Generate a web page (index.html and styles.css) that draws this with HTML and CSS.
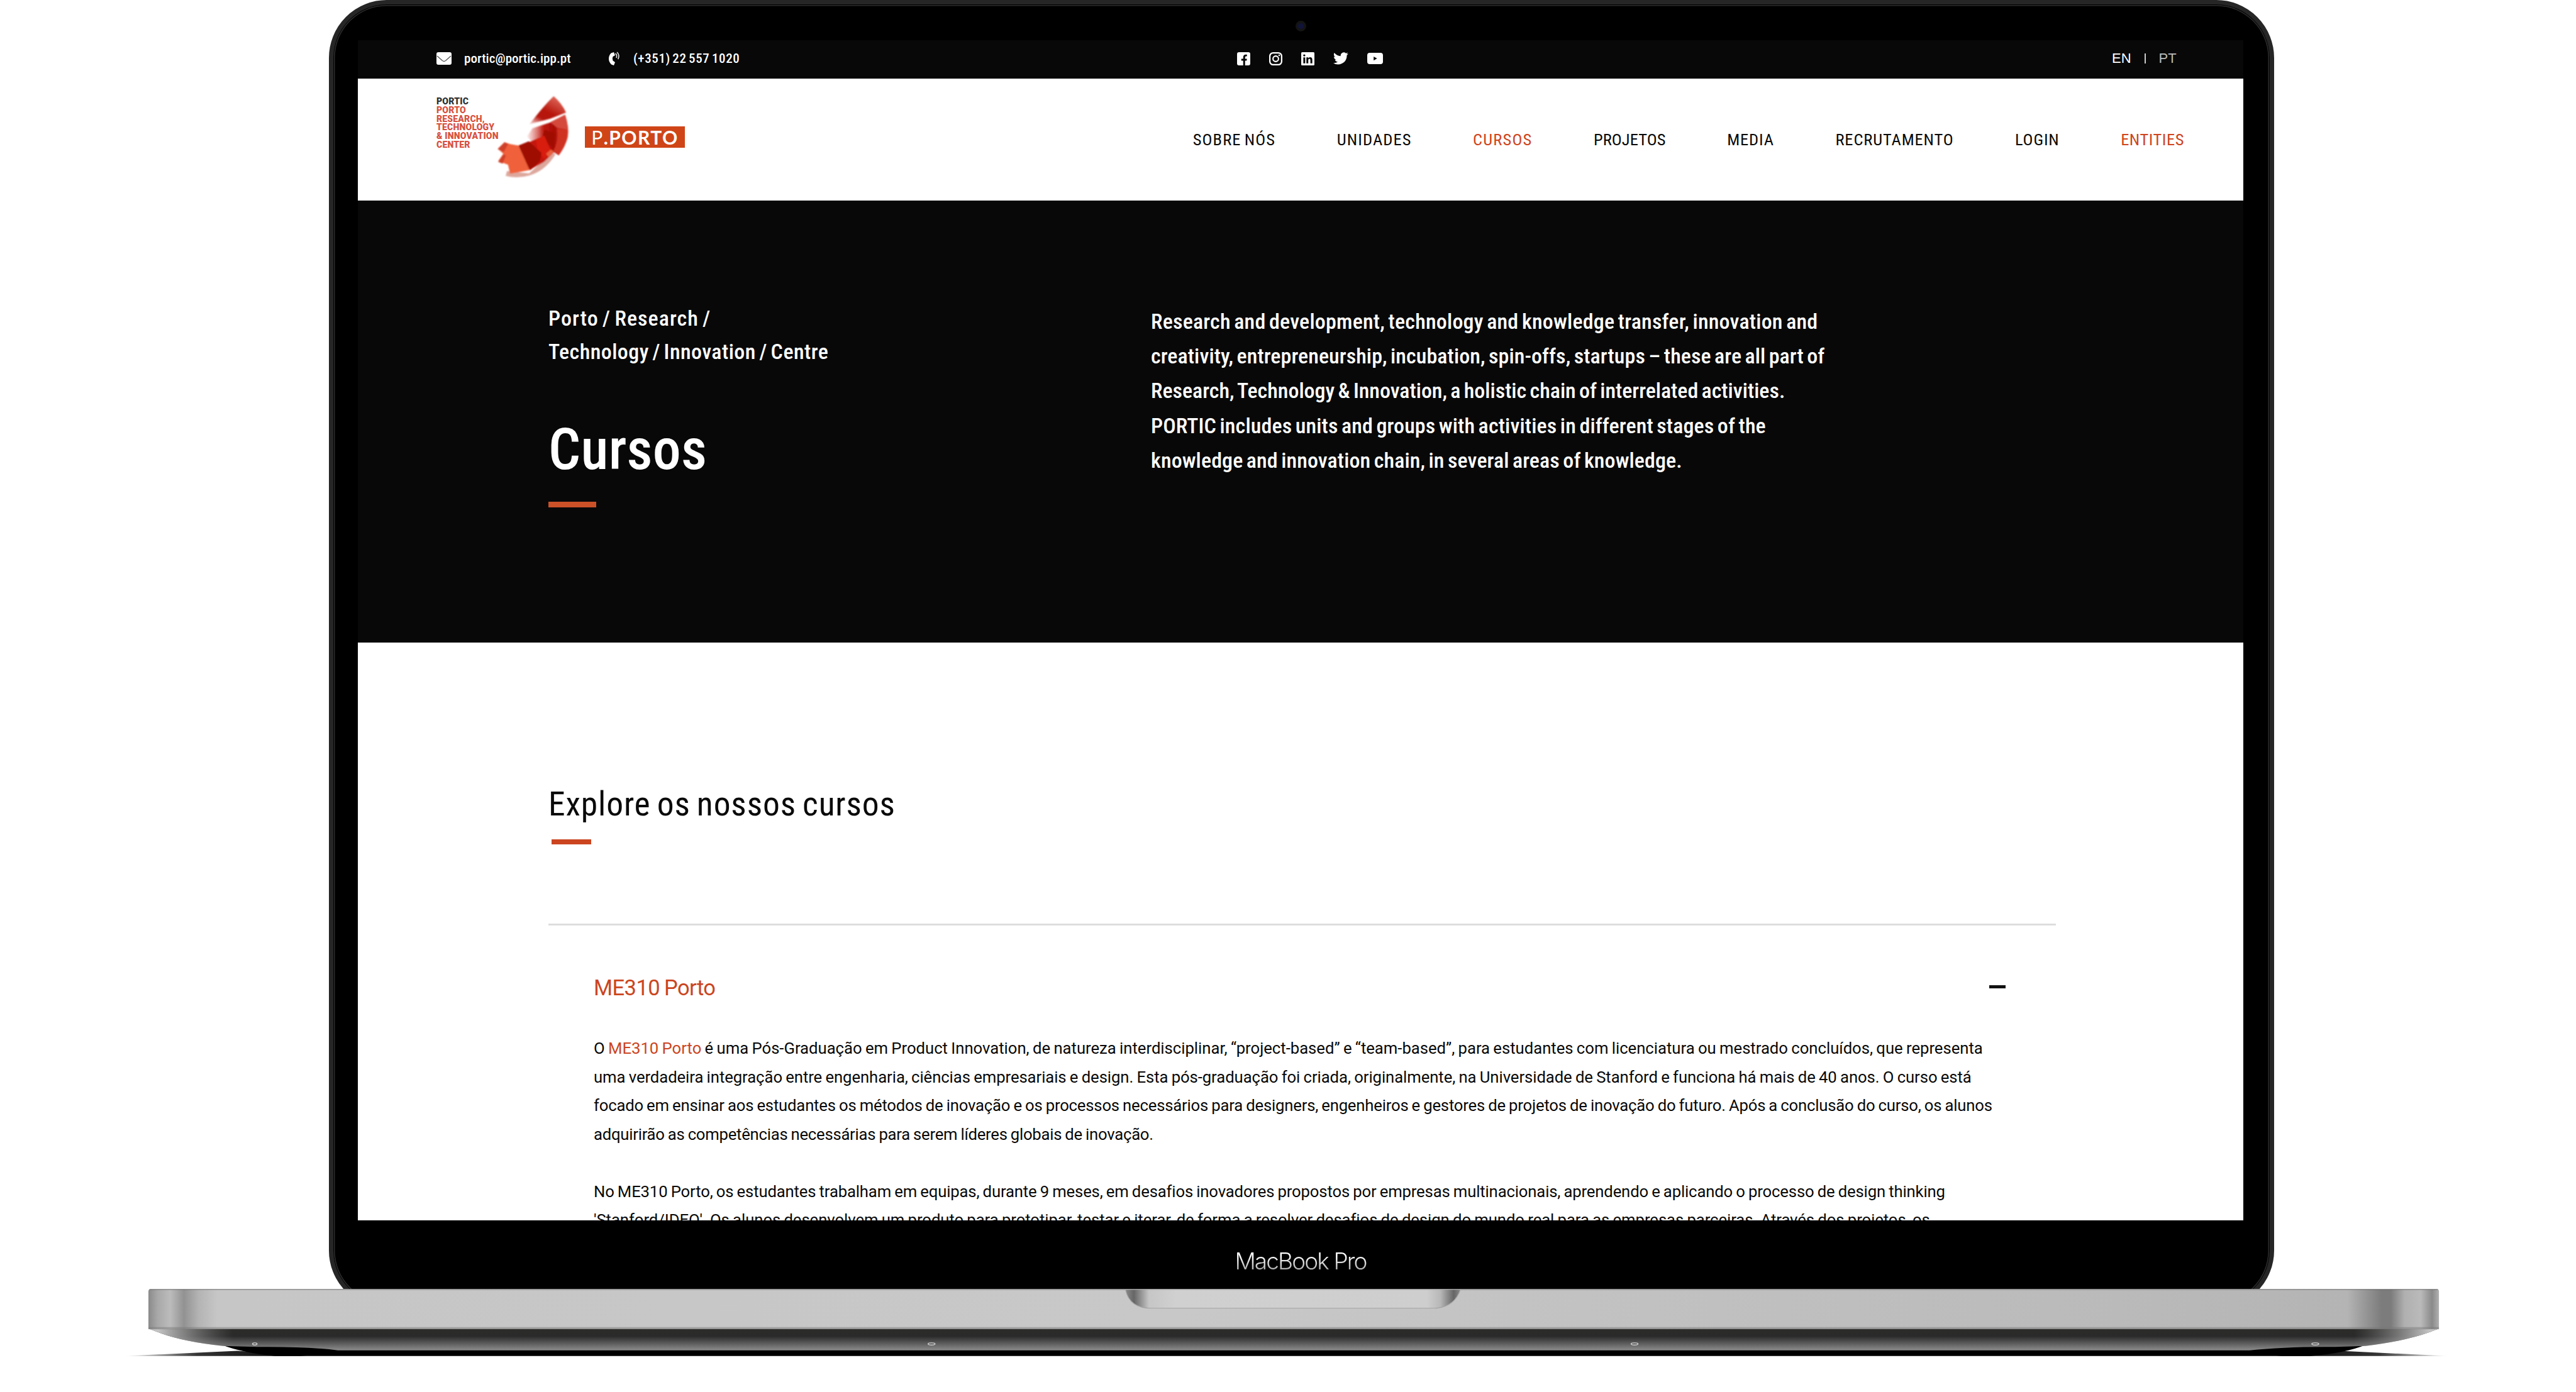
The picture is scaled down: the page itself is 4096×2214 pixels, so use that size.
FILE: index.html
```html
<!DOCTYPE html>
<html lang="pt">
<head>
<meta charset="utf-8">
<title>PORTIC – Cursos</title>
<link rel="stylesheet" href="styles.css">
</head>
<body>
<div class="laptop">
  <div class="lid-frame">
    <div class="lid">
      <div class="bezel-top"><span class="camera"></span></div>
      <div class="screen">
        <div class="topbar">
          <div class="contacts">
            <svg class="icon-mail" viewBox="0 0 24 20"><rect width="24" height="20" rx="3" fill="#fff"/><path d="M1 6l8.500 7.500q2.500 2 5 0L23 6" fill="none" stroke="#555" stroke-width="1.300"/></svg>
            <span class="mail">portic@portic.ipp.pt</span>
            <svg class="icon-phone" viewBox="0 0 19 22"><path d="M8 1L3.500 2.500Q0 6.500 0 11.500T4 20.500L8 22l2-5-3.500-2.500Q5 11 6.500 8L10 6z" fill="#fff"/><path d="M11 3.500q2.500 2.200 1.200 6M13.500 1.500q4 4 1.500 10" fill="none" stroke="#ddd" stroke-width="1.700" stroke-linecap="round"/></svg>
            <span class="phone">(+351) 22 557 1020</span>
          </div>
          <div class="social">
            <svg class="sq" viewBox="0 0 28 28"><rect width="28" height="28" rx="4" fill="#fff"/><path d="M13 28V18H9v-4h4v-3q0-6 5.500-6H21v3.800h-2q-2 0-2 2.200v3h4l-.600 4H17v10z" fill="#080808"/></svg>
            <svg class="sq" viewBox="0 0 28 28"><rect x="1.500" y="1.500" width="25" height="25" rx="7" fill="none" stroke="#fff" stroke-width="3"/><circle cx="14" cy="14" r="5.800" fill="none" stroke="#fff" stroke-width="2.800"/><circle cx="21.300" cy="6.700" r="1.700" fill="#fff"/></svg>
            <svg class="sq" viewBox="0 0 28 28"><rect width="28" height="28" rx="2" fill="#fff"/><path d="M4.500 11h4v12.500h-4zM11 11h3.800v1.800q1.500-2.200 4-2.200 4.700 0 4.700 5.600v7.300h-4v-6.500q0-3-2.200-3T15 17v6.500h-4z" fill="#080808"/><circle cx="6.500" cy="6.800" r="2.300" fill="#080808"/></svg>
            <svg class="tw" viewBox="0 0 24 20"><path d="M24 2.400a10 10 0 0 1-2.500 2.500C22 13 16 19.500 7.500 19.500A14 14 0 0 1 0 17.300a10 10 0 0 0 7.200-2A5 5 0 0 1 2.700 12a5 5 0 0 0 2.100-.1A5 5 0 0 1 1 7a5 5 0 0 0 2.200.6A5 5 0 0 1 1.700 1a14 14 0 0 0 10 5.200A5 5 0 0 1 20 1.700a10 10 0 0 0 3.100-1.200A5 5 0 0 1 21 3.200a10 10 0 0 0 3-.8z" fill="#fff"/></svg>
            <svg class="yt" viewBox="0 0 32 23"><rect width="32" height="23" rx="5" fill="#fff"/><path d="M13 7.500v8l7-4z" fill="#080808"/></svg>
          </div>
          <div class="lang"><span>EN</span><i></i><span class="off">PT</span></div>
        </div>
        <header class="header">
          <div class="logo-text">
            <b class="dark">PORTIC</b>
            <b>PORTO</b>
            <b>RESEARCH,</b>
            <b>TECHNOLOGY</b>
            <b>&amp; INNOVATION</b>
            <b>CENTER</b>
          </div>
          <svg class="swirl" viewBox="420 30 430 520" preserveAspectRatio="none">
            <defs>
              <linearGradient id="g1" x1="0" y1="1" x2=".7" y2="0"><stop offset="0" stop-color="#c9302a" stop-opacity=".15"/><stop offset=".3" stop-color="#b51208"/><stop offset=".55" stop-color="#b81a10"/><stop offset="1" stop-color="#e0685a"/></linearGradient>
              <linearGradient id="g2" x1="0" y1="0" x2="1" y2="0"><stop offset="0" stop-color="#d85048" stop-opacity=".1"/><stop offset=".4" stop-color="#bd1a10"/><stop offset=".65" stop-color="#a80a05"/><stop offset="1" stop-color="#d8402e"/></linearGradient>
              <filter id="soft"><feGaussianBlur stdDeviation="4"/></filter>
            </defs>
            <g filter="url(#soft)">
              <path d="M755 45Q805 90 828 145L735 182 612 215 640 180Q700 100 755 45z" fill="url(#g1)"/>
              <path d="M822 158Q848 235 838 295 825 350 785 405L735 372 625 322 598 290 630 240 735 205z" fill="url(#g2)"/>
              <path d="M735 203l87-45q14 40 16 88l-60-8z" fill="#d5493c"/>
              <path d="M775 243l62 8q-6 85-52 154l-32-25q32-60 22-137z" fill="#d03020"/>
              <path d="M700 250l65 20-10 90-70-50z" fill="#a00a05"/>
              <path d="M480 500l130 15 80-75 65-50 10 10Q705 500 610 528 540 548 472 530z" fill="#dda79c"/>
              <path d="M548 345l75-25 45-20 90 85-60 60-85 50-45-60z" fill="#c4140c"/>
              <path d="M650 310l50-25 40 95-40 50-40-60z" fill="#d81e10"/>
              <path d="M548 345l60-25 75 70-10 50-55 55-45-60z" fill="#9f0804"/>
              <path d="M465 325l35 12 48 8 65 150q-60 12-115 22l-12-55-58-22 30-45-32-30z" fill="#f0603a"/>
              <path d="M465 325l22 10-26 50-36-18zM428 445l30-45 16 5-20 50z" fill="#cf402c"/>
              <path d="M710 395l28-25 18 12-30 35z" fill="#e8603c"/>
            </g>
          </svg>
          <div class="pporto"><span><em>P</em>.PORTO</span></div>
          <nav class="nav">
            <a>SOBRE NÓS</a>
            <a>UNIDADES</a>
            <a class="on">CURSOS</a>
            <a>PROJETOS</a>
            <a>MEDIA</a>
            <a>RECRUTAMENTO</a>
            <a>LOGIN</a>
            <a class="on">ENTITIES</a>
          </nav>
        </header>
        <section class="hero">
          <div class="hero-left">
            <p class="crumb"><span>Porto / Research /</span><span>Technology / Innovation / Centre</span></p>
            <h1>Cursos</h1>
            <div class="rule"></div>
          </div>
          <p class="intro">
            <span>Research and development, technology and knowledge transfer, innovation and</span>
            <span>creativity, entrepreneurship, incubation, spin-offs, startups – these are all part of</span>
            <span>Research, Technology &amp; Innovation, a holistic chain of interrelated activities.</span>
            <span>PORTIC includes units and groups with activities in different stages of the</span>
            <span>knowledge and innovation chain, in several areas of knowledge.</span>
          </p>
        </section>
        <main class="content">
          <h2>Explore os nossos cursos</h2>
          <div class="rule small"></div>
          <article class="course">
            <div class="course-head"><h3>ME310 Porto</h3><i class="minus"></i></div>
            <p class="about">
              <span>O <a>ME310 Porto</a> é uma Pós-Graduação em Product Innovation, de natureza interdisciplinar, “project-based” e “team-based”, para estudantes com licenciatura ou mestrado concluídos, que representa</span>
              <span>uma verdadeira integração entre engenharia, ciências empresariais e design. Esta pós-graduação foi criada, originalmente, na Universidade de Stanford e funciona há mais de 40 anos. O curso está</span>
              <span>focado em ensinar aos estudantes os métodos de inovação e os processos necessários para designers, engenheiros e gestores de projetos de inovação do futuro. Após a conclusão do curso, os alunos</span>
              <span>adquirirão as competências necessárias para serem líderes globais de inovação.</span>
            </p>
            <p class="method">
              <span>No ME310 Porto, os estudantes trabalham em equipas, durante 9 meses, em desafios inovadores propostos por empresas multinacionais, aprendendo e aplicando o processo de design thinking</span>
              <span>'Stanford/IDEO'. Os alunos desenvolvem um produto para prototipar, testar e iterar, de forma a resolver desafios de design do mundo real para as empresas parceiras. Através dos projetos, os</span>
            </p>
          </article>
        </main>
      </div>
      <div class="brand"><span>MacBook Pro</span></div>
    </div>
  </div>
  <svg class="base" viewBox="0 2606 5207 208" preserveAspectRatio="none">
    <defs>
      <linearGradient id="front" gradientUnits="userSpaceOnUse" x1="300" y1="0" x2="4930" y2="0">
        <stop offset="0" stop-color="#8a8a8a"/><stop offset=".004" stop-color="#a8a8a8"/><stop offset=".0095" stop-color="#bcbcbc"/><stop offset=".0155" stop-color="#929292"/><stop offset=".022" stop-color="#b4b4b4"/><stop offset=".03" stop-color="#c6c6c6"/><stop offset=".45" stop-color="#c8c8c8"/><stop offset=".86" stop-color="#bababa"/><stop offset=".96" stop-color="#b4b4b4"/><stop offset=".975" stop-color="#7c7c7c"/><stop offset=".979" stop-color="#7c7c7c"/><stop offset=".985" stop-color="#b0b0b0"/><stop offset=".992" stop-color="#bababa"/><stop offset=".997" stop-color="#8a8a8a"/><stop offset="1" stop-color="#b0b0b0"/>
      </linearGradient>
      <linearGradient id="under" x1="0" y1="0" x2="0" y2="1"><stop offset="0" stop-color="#2c2c2a"/><stop offset=".35" stop-color="#2a2a2a"/><stop offset="1" stop-color="#8c8c8c"/></linearGradient>
      <linearGradient id="fadeL" gradientUnits="userSpaceOnUse" x1="320" y1="2700" x2="470" y2="2685"><stop offset="0" stop-color="#c4c4c4"/><stop offset="1" stop-color="#888" stop-opacity="0"/></linearGradient>
      <linearGradient id="fadeR" gradientUnits="userSpaceOnUse" x1="4910" y1="2700" x2="4760" y2="2685"><stop offset="0" stop-color="#c4c4c4"/><stop offset="1" stop-color="#888" stop-opacity="0"/></linearGradient>
      <linearGradient id="shL" x1="0" y1="0" x2="1" y2="0"><stop offset="0" stop-color="#000" stop-opacity="0"/><stop offset=".4" stop-color="#111" stop-opacity=".85"/><stop offset="1" stop-color="#000"/></linearGradient>
      <linearGradient id="shR" x1="1" y1="0" x2="0" y2="0"><stop offset="0" stop-color="#000" stop-opacity="0"/><stop offset=".4" stop-color="#111" stop-opacity=".85"/><stop offset="1" stop-color="#000"/></linearGradient>
      <linearGradient id="nb" gradientUnits="userSpaceOnUse" x1="2275" y1="0" x2="2952" y2="0"><stop offset="0" stop-color="#8a8a8a"/><stop offset=".025" stop-color="#666"/><stop offset=".07" stop-color="#c6c6c6"/><stop offset=".15" stop-color="#d0d0d0"/><stop offset=".9" stop-color="#cecece"/><stop offset=".94" stop-color="#b8b8b8"/><stop offset=".98" stop-color="#666"/><stop offset="1" stop-color="#8a8a8a"/></linearGradient>
    </defs>
    <path d="M250 2741.500L480 2731 620 2741.500z" fill="url(#shL)"/>
    <path d="M4950 2741.500L4730 2731 4600 2741.500z" fill="url(#shR)"/>
    <path d="M448 2719Q490 2735 555 2741.500H4670Q4740 2736 4782 2719z" fill="#000"/>
    <path d="M300 2686L318 2693Q370 2713 450 2721 L520 2723Q620 2722 683 2730H4547Q4620 2722 4720 2723L4782 2721Q4860 2712 4912 2693L4930 2686z" fill="url(#under)"/>
    <path d="M300 2686L318 2693Q370 2713 450 2721L470 2721V2686z" fill="url(#fadeL)"/>
    <path d="M4930 2686L4912 2693Q4860 2712 4782 2721L4760 2721V2686z" fill="url(#fadeR)"/>
    <path d="M300 2611q0-4 4-4H4926q4 0 4 4V2687H300z" fill="url(#front)"/>
    <path d="M300 2683H4930V2687.500H300z" fill="#777" opacity=".45"/>
    <path d="M302 2607H4928" stroke="#555" stroke-width="1.600" opacity=".7"/>
    <path d="M2275 2607Q2283 2645 2327 2645H2900Q2940 2643 2952 2607z" fill="url(#nb)" stroke="#a2a2a2" stroke-width="1.500"/>
    <g fill="#333" stroke="#ccc" stroke-width="2"><ellipse cx="515" cy="2717" rx="4.500" ry="2"/><ellipse cx="1883" cy="2717" rx="7" ry="2"/><ellipse cx="3304" cy="2717" rx="7" ry="2"/><ellipse cx="4680" cy="2717" rx="7" ry="2"/></g>
  </svg>
</div>
</body>
</html>
```
FILE: styles.css
```css
* { box-sizing: border-box; margin: 0; padding: 0; }

body {
  width: 4096px;
  height: 2214px;
  overflow: hidden;
  background: #fff;
  color: #0a0a0a;
  font-family: "Roboto Condensed", "Roboto", "Liberation Sans", sans-serif;
}

svg { display: block; flex: none; }

/* Laptop shell */
.laptop { display: flex; flex-direction: column; height: 2214px; }
.lid-frame { height: 2050px; overflow: hidden; padding: 0 480px 0 523px; }
.lid {
  height: 2081px;
  padding: 0 42px 0 39px;
  border: 7px solid #262626;
  border-radius: 92px;
  background: #000;
  box-shadow: inset 0 0 0 1px #000, inset 0 0 0 2.5px #2c2c2c;
}
.bezel-top { height: 57px; display: flex; justify-content: center; align-items: center; padding-top: 12px; }
.camera {
  width: 17px;
  height: 17px;
  border: 4px solid #141414;
  border-radius: 50%;
  background: #10143a;
}
.screen { height: 1877px; overflow: hidden; background: #fff; }
.brand {
  display: flex;
  justify-content: center;
  padding-top: 43px;
  font: 300 37px/44px "Inter", sans-serif;
  letter-spacing: -1.9px;
}
.brand span {
  background: linear-gradient(#fff 30%, #b0b0b0 80%);
  background-clip: text;
  -webkit-background-clip: text;
  color: transparent;
}
.base { width: 4096px; height: 164px; }

/* Top bar */
.topbar {
  display: grid;
  grid-template-columns: 1273px 1391px auto;
  align-items: center;
  height: 61px;
  padding-left: 125px;
  border-bottom: 3px solid #000;
  background: #080808;
  color: #fff;
}
.contacts { display: flex; align-items: center; font-size: 21px; font-weight: 500; white-space: nowrap; }
.icon-mail { width: 24px; height: 20px; }
.mail { width: 169px; margin: 0 61px 0 20px; letter-spacing: 0.05px; }
.icon-phone { width: 19px; height: 22px; margin-right: 20px; }
.phone { word-spacing: -2px; letter-spacing: 0.63px; }
.social { display: flex; align-items: center; }
.sq { width: 21px; height: 21px; margin-right: 30px; }
.tw { width: 24px; height: 20px; margin-right: 30px; }
.yt { width: 25px; height: 18px; }
.lang { display: flex; align-items: center; font: 22px/26px "Liberation Sans", sans-serif; }
.lang i { width: 2px; height: 16px; margin: 0 21px; background: #ccc; }
.lang .off { color: #bbb; }

/* Header */
.header { display: flex; align-items: center; height: 194px; padding: 0 94px 0 125px; background: #fff; }
.logo-text {
  display: flex;
  flex-direction: column;
  align-self: flex-start;
  width: 96px;
  margin-top: 30px;
  color: #d8503f;
  font: 700 14px/13.8px "Roboto", sans-serif;
  letter-spacing: 0.2px;
  white-space: nowrap;
}
.logo-text .dark { color: #2b3034; }
.swirl { width: 116px; height: 136px; align-self: flex-start; margin-top: 24px; }
.pporto {
  display: flex;
  align-items: center;
  justify-content: center;
  width: 159px;
  height: 34px;
  margin: -9px 0 0 24px;
  background: #cf4517;
  color: #fff;
  font: 700 30px/34px "Lato", sans-serif;
  letter-spacing: 1.5px;
}
.pporto em { font-style: normal; font-weight: 400; }
.nav { display: flex; gap: 97.5px; margin-left: auto; font-size: 26.5px; line-height: 32px; letter-spacing: 0.85px; white-space: nowrap; }
.nav a:nth-child(1) { word-spacing: -2px; letter-spacing: 1.1px; }
.nav a:nth-child(2) { letter-spacing: 1.1px; }
.nav a:nth-child(3) { letter-spacing: 1.15px; }
.nav a:nth-child(4) { letter-spacing: 0.1px; }
.nav a:nth-child(8) { letter-spacing: 0.53px; }
.nav .on { color: #cf4520; }

/* Hero */
.hero {
  display: grid;
  grid-template-columns: 958px auto;
  height: 703px;
  padding: 161px 0 0 303px;
  background: #080808;
  color: #fff;
  font-size: 34px;
  font-weight: 500;
  word-spacing: -2.5px;
}
.hero span, .course span { display: block; white-space: nowrap; }
.crumb { line-height: 53px; }
.crumb span:nth-child(1) { letter-spacing: 1.06px; }
.crumb span:nth-child(2) { letter-spacing: 0.44px; }
h1 { margin-top: 80px; font-size: 90px; line-height: 100px; font-weight: 500; letter-spacing: 0.27px; }
.rule { width: 76px; height: 9px; margin-top: 32px; background: #cb5128; }
.intro { padding-top: 4px; line-height: 55.2px; }
.intro span:nth-child(1) { letter-spacing: 0.204px; }
.intro span:nth-child(2) { letter-spacing: 0.074px; }
.intro span:nth-child(3) { letter-spacing: -0.018px; }
.intro span:nth-child(4) { letter-spacing: 0.128px; }
.intro span:nth-child(5) { letter-spacing: 0.102px; }

/* Course list */
.content { padding: 225px 298px 0 303px; }
h2 { font-size: 53.5px; line-height: 64px; font-weight: 400; letter-spacing: 0.87px; word-spacing: -3px; }
.rule.small { width: 63px; height: 8px; margin: 24px 0 0 5px; background: #cb4520; }
.course { margin-top: 126px; padding: 77px 0 0 72px; border-top: 3px solid #ddd; font-family: "Roboto", sans-serif; }
.course-head { display: flex; align-items: center; justify-content: space-between; padding-right: 80px; margin-bottom: 52px; }
h3 { font-size: 34.5px; line-height: 44px; font-weight: 400; letter-spacing: -0.58px; word-spacing: -1px; color: #cb4520; }
.minus { width: 26px; height: 5px; margin-top: -4px; background: #111; }
.course p { margin-bottom: 45.5px; font-size: 25.7px; line-height: 45.5px; word-spacing: -1px; }
.course p a { color: #cb4520; }
.about span:nth-child(1) { letter-spacing: -0.025px; }
.about span:nth-child(2) { letter-spacing: -0.077px; }
.about span:nth-child(3) { letter-spacing: -0.2px; }
.about span:nth-child(4) { letter-spacing: -0.254px; }
.method span:nth-child(1) { letter-spacing: -0.158px; }
.method span:nth-child(2) { letter-spacing: -0.07px; }
```
